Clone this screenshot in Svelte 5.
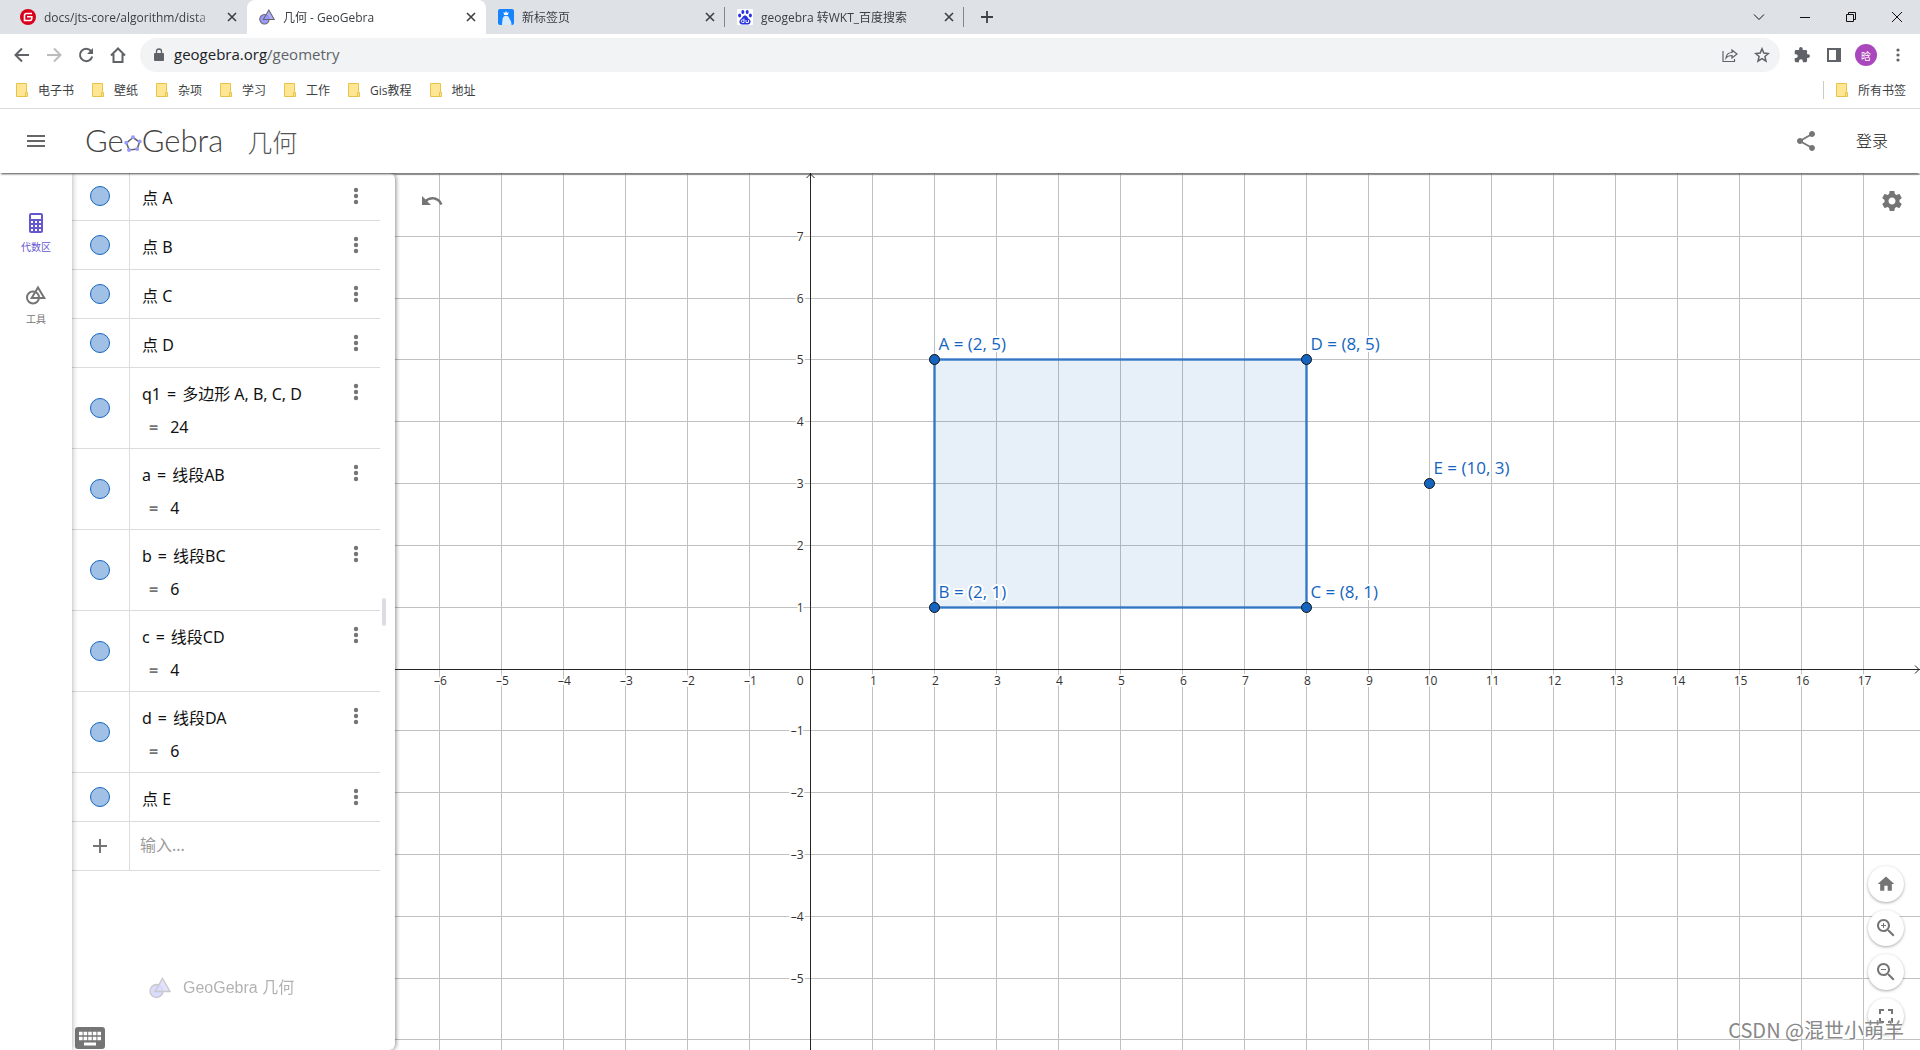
<script lang="ts">
  const tabs = [
    { icon: 'gitee', label: 'docs/jts-core/algorithm/dista', active: false },
    { icon: 'geogebra', label: '几何 - GeoGebra', active: true },
    { icon: 'newtab', label: '新标签页', active: false },
    { icon: 'baidu', label: 'geogebra 转WKT_百度搜索', active: false },
  ]

  const bookmarks = ['电子书', '壁纸', '杂项', '学习', '工作', 'Gis教程', '地址']

  const rows = [
    { text: '点 A' },
    { text: '点 B' },
    { text: '点 C' },
    { text: '点 D' },
    { name: 'q1', text: '多边形 A, B, C, D', value: '24' },
    { name: 'a', text: '线段AB', value: '4' },
    { name: 'b', text: '线段BC', value: '6' },
    { name: 'c', text: '线段CD', value: '4' },
    { name: 'd', text: '线段DA', value: '6' },
    { text: '点 E' },
  ]

  const points = [
    { name: 'A', x: 2, y: 5 },
    { name: 'B', x: 2, y: 1 },
    { name: 'C', x: 8, y: 1 },
    { name: 'D', x: 8, y: 5 },
    { name: 'E', x: 10, y: 3 },
  ]

  const unit = { x: 61.9, y: 61.83 }
  const origin = { x: 415.4, y: 496 }

  let width = $state(1524)
  let height = $state(877)
  let input = $state('')

  const sx = (x: number) => Math.round(origin.x + x * unit.x) + 0.5
  const sy = (y: number) => Math.floor(origin.y - y * unit.y) + 0.5
  const label = (n: number) => String(n).replace('-', '–')

  function range(from: number, to: number) {
    const out = []
    for (let i = Math.ceil(from); i <= to; i++) out.push(i)
    return out
  }

  const xs = $derived(range(-origin.x / unit.x, (width - origin.x) / unit.x))
  const ys = $derived(range((origin.y - height) / unit.y, origin.y / unit.y))
  const polygon = points
    .slice(0, 4)
    .map((p) => `${sx(p.x)},${sy(p.y)}`)
    .join(' ')
</script>

{#snippet ggb(size)}
  <svg width={size} height={size} viewBox="0 0 22 22" aria-hidden="true">
    <circle cx="7.500" cy="14" r="6.500" fill="#9999ff" stroke="#666" stroke-width="1.400" />
    <path d="M13.500 1.500L21 14.500H6z" fill="#9999ff" fill-opacity=".8" stroke="#666" stroke-width="1.400" />
  </svg>
{/snippet}

{#snippet dots()}
  <svg width="6" height="18" viewBox="0 0 6 18" fill="#757575" aria-hidden="true">
    <circle cx="3" cy="3" r="2.200" /><circle cx="3" cy="9" r="2.200" /><circle cx="3" cy="15" r="2.200" />
  </svg>
{/snippet}

{#snippet folder()}
  <svg width="12" height="14" viewBox="0 0 12 14" aria-hidden="true">
    <path d="M.5.5h10v9h1v4H.5z" fill="#ffe694" stroke="#e8c34a" />
    <path d="M9.500 13v-3.500h1" fill="none" stroke="#e8c34a" />
  </svg>
{/snippet}

<div class="page">
  <div class="tabstrip">
    {#each tabs as tab}
      <div class="tab" class:active={tab.active}>
        {#if tab.icon === 'gitee'}
          <svg width="16" height="16" viewBox="0 0 16 16" aria-hidden="true">
            <circle cx="8" cy="8" r="8" fill="#d8001b" />
            <path d="M12 4.500H6.500a2 2 0 0 0-2 2v5h5a2.300 2.300 0 0 0 2.300-2.300V7.800H7" fill="none" stroke="#fff" stroke-width="1.600" />
          </svg>
        {:else if tab.icon === 'geogebra'}
          {@render ggb(16)}
        {:else if tab.icon === 'newtab'}
          <svg width="16" height="16" viewBox="0 0 16 16" aria-hidden="true">
            <rect width="16" height="16" rx="2" fill="#1684fc" />
            <path d="M5.500 3l1.500 1 1-2 1 2 1.500-1L10 6H6z" fill="#fff" />
            <path d="M4 16c0-3 .5-4 .5-5.500C4.500 5.500 11 5.500 11.500 10c1.500 1.500 2 3.500 2 6z" fill="#d6eaff" />
          </svg>
        {:else}
          <svg width="16" height="16" viewBox="0 0 16 16" aria-hidden="true">
            <rect width="16" height="16" rx="1" fill="#fff" />
            <g fill="#2932e1">
              <ellipse cx="2.600" cy="6.500" rx="1.500" ry="2" /><ellipse cx="5.800" cy="3" rx="1.500" ry="2.100" />
              <ellipse cx="10.200" cy="3" rx="1.500" ry="2.100" /><ellipse cx="13.400" cy="6.500" rx="1.500" ry="2" />
              <path d="M8 6.500c2.200 0 2.600 2.500 4.300 3.800 2.500 2 1 5.200-1.300 5.200H5c-2.300 0-3.800-3.200-1.300-5.200C5.400 9 5.800 6.500 8 6.500z" />
            </g>
            <path d="M7 9.500v4H5.500a1 1 0 0 1 0-2.500H7M9 11v2.500h2.500V11" fill="none" stroke="#fff" stroke-width=".9" />
          </svg>
        {/if}
        <span class="tab-label">{tab.label}</span>
        <button class="close" aria-label="关闭">
          <svg width="10" height="10" viewBox="0 0 10 10"><path d="M1 1l8 8M9 1L1 9" stroke="#3c4043" stroke-width="1.600" /></svg>
        </button>
      </div>
    {/each}
    <button class="newtab" aria-label="新标签页">
      <svg width="12" height="12" viewBox="0 0 12 12"><path d="M6 0v12M0 6h12" stroke="#3c4043" stroke-width="1.800" /></svg>
    </button>
    <div class="window-buttons">
      <button aria-label="搜索标签页"><svg width="12" height="12" viewBox="0 0 12 12"><path d="M1 3.500l5 5 5-5" /></svg></button>
      <button aria-label="最小化"><svg width="12" height="12" viewBox="0 0 12 12"><path d="M1 6.500h10" /></svg></button>
      <button aria-label="还原"><svg width="12" height="12" viewBox="0 0 12 12"><path d="M1.500 3.500h7v7h-7zM3.500 3.500v-2h7v7h-2" /></svg></button>
      <button aria-label="关闭窗口"><svg width="12" height="12" viewBox="0 0 12 12"><path d="M1 1l10 10M11 1L1 11" /></svg></button>
    </div>
  </div>

  <div class="toolbar">
    <button class="nav" aria-label="后退">
      <svg width="16" height="16" viewBox="0 0 16 16"><path d="M15 8H2M8 1.500L1.500 8 8 14.500" /></svg>
    </button>
    <button class="nav off" aria-label="前进">
      <svg width="16" height="16" viewBox="0 0 16 16"><path d="M1 8h13M8 1.500L14.500 8 8 14.500" /></svg>
    </button>
    <button class="nav" aria-label="刷新">
      <svg width="16" height="16" viewBox="0 0 16 16"><path d="M13 4A6.200 6.200 0 1 0 14.200 9.500" /><path d="M15 1v6H9z" fill="#5f6368" stroke="none" /></svg>
    </button>
    <button class="nav" aria-label="主页">
      <svg width="16" height="16" viewBox="0 0 16 16"><path d="M1 8.500L8 1.500l7 7M3.500 7v8h9V7" /></svg>
    </button>
    <div class="omnibox">
      <svg width="10" height="14" viewBox="0 0 10 14" aria-hidden="true">
        <path d="M1 5h8a1 1 0 0 1 1 1v6a1 1 0 0 1-1 1H1a1 1 0 0 1-1-1V6a1 1 0 0 1 1-1z" fill="#5f6368" />
        <path d="M2.500 6V3.500a2.500 2.500 0 0 1 5 0V6" fill="none" stroke="#5f6368" stroke-width="1.300" />
      </svg>
      <div class="url">geogebra.org<span>/geometry</span></div>
      <button class="ico" aria-label="分享此页">
        <svg width="16" height="16" viewBox="0 0 16 16" fill="none" stroke="#5f6368" stroke-width="1.200">
          <path d="M1 4v10.500h11.500V12M4 11c.5-4 3-5.500 6-5.500V3l5 4-5 4V8.500C7.500 8.500 5.500 9 4 11z" />
        </svg>
      </button>
      <button class="ico" aria-label="添加书签">
        <svg width="16" height="16" viewBox="0 0 16 16" fill="none" stroke="#5f6368" stroke-width="1.500">
          <path d="M8 1.800l1.800 4.300 4.600.4-3.500 3 1.100 4.600L8 11.700l-4 2.400 1.100-4.600-3.500-3 4.600-.4z" />
        </svg>
      </button>
    </div>
    <div class="extensions">
      <button class="ico" aria-label="扩展程序">
        <svg width="16" height="16" viewBox="1 1 22 22" fill="#5f6368">
          <path d="M20.500 11H19V7a2 2 0 0 0-2-2h-4V3.500a2.500 2.500 0 0 0-5 0V5H4a2 2 0 0 0-2 2v3.800h1.500a2.700 2.700 0 0 1 0 5.400H2V20a2 2 0 0 0 2 2h3.800v-1.500a2.700 2.700 0 0 1 5.400 0V22H17a2 2 0 0 0 2-2v-4h1.500a2.500 2.500 0 0 0 0-5z" />
        </svg>
      </button>
      <button class="ico" aria-label="侧边栏">
        <svg width="16" height="16" viewBox="0 0 16 16"><path d="M2 2h12v12H2z" fill="none" stroke="#5f6368" stroke-width="2" /><path d="M10 2h4v12h-4z" fill="#5f6368" /></svg>
      </button>
      <button class="avatar">晗</button>
      <button class="ico" aria-label="菜单">
        <svg width="4" height="14" viewBox="0 0 4 14" fill="#5f6368"><circle cx="2" cy="2" r="1.600" /><circle cx="2" cy="7" r="1.600" /><circle cx="2" cy="12" r="1.600" /></svg>
      </button>
    </div>
  </div>

  <div class="bookmarks">
    {#each bookmarks as name}
      <a href="#bookmark">{@render folder()}{name}</a>
    {/each}
    <a class="all" href="#bookmark">{@render folder()}所有书签</a>
  </div>

  <header>
    <button class="plain" aria-label="主菜单">
      <svg width="18" height="12" viewBox="0 0 18 12"><path d="M0 1h18M0 6h18M0 11h18" stroke="#666" stroke-width="2" /></svg>
    </button>
    <a class="logo" href="#home">
      <span>Ge</span>
      <svg width="18" height="17" viewBox="0 0 18 17" aria-label="o">
        <path d="M9 2.500l6.500 4.500-2.300 7-8 1L2.500 8z" fill="none" stroke="#666" stroke-width="1.600" />
        <g fill="#9999ff"><circle cx="9" cy="2.300" r="2" /><circle cx="15.700" cy="6.500" r="2" /><circle cx="13.200" cy="14" r="2" /><circle cx="5" cy="15" r="2" /><circle cx="2.300" cy="7.800" r="2" /></g>
      </svg>
      <span>Gebra</span>
    </a>
    <h1>几何</h1>
    <button class="plain share" aria-label="分享">
      <svg width="24" height="24" viewBox="0 0 24 24" fill="#757575">
        <path d="M18 16.080c-.76 0-1.440.3-1.960.77L8.910 12.700c.05-.23.09-.46.09-.7s-.04-.47-.09-.7l7.050-4.110c.54.5 1.250.81 2.040.81 1.660 0 3-1.340 3-3s-1.340-3-3-3-3 1.340-3 3c0 .24.04.47.09.7L8.040 9.810C7.500 9.310 6.790 9 6 9c-1.660 0-3 1.340-3 3s1.340 3 3 3c.79 0 1.500-.31 2.040-.81l7.120 4.160c-.05.21-.08.43-.08.65 0 1.610 1.310 2.920 2.920 2.920s2.920-1.310 2.920-2.920-1.310-2.920-2.920-2.920z" />
      </svg>
    </button>
    <button class="plain login">登录</button>
  </header>

  <main>
    <nav class="rail">
      <button class="rail-item selected">
        <svg width="24" height="24" viewBox="0 0 24 24">
          <path fill-rule="evenodd" fill="#6557d2" d="M7 2h10a2 2 0 0 1 2 2v16a2 2 0 0 1-2 2H7a2 2 0 0 1-2-2V4a2 2 0 0 1 2-2zM7 4v4h10V4zM7 10v2h2v-2zM11 10v2h2v-2zM15 10v2h2v-2zM7 14v2h2v-2zM11 14v2h2v-2zM15 14v2h2v-2zM7 18v2h2v-2zM11 18v2h2v-2zM15 18v2h2v-2z" />
        </svg>
        代数区
      </button>
      <button class="rail-item">
        <svg width="24" height="24" viewBox="0 0 24 24" fill="none" stroke="#757575" stroke-width="2">
          <circle cx="9" cy="14.500" r="6" /><path d="M14 4.500L20.300 15H7.700z" />
        </svg>
        工具
      </button>
    </nav>

    <section class="algebra">
      <div class="list">
        {#each rows as row}
          <div class="row" class:tall={row.value}>
            <div class="marble-cell"><button class="marble" aria-label="显示 {row.name ?? row.text}"></button></div>
            <div class="content">
              <div>{#if row.name}{row.name}<span class="op">=</span>{/if}{row.text}</div>
              {#if row.value}
                <div class="value"><b>=</b>{row.value}</div>
              {/if}
            </div>
            <button class="plain more" aria-label="更多">{@render dots()}</button>
          </div>
        {/each}
        <div class="row">
          <div class="marble-cell">
            <button class="plain" aria-label="添加">
              <svg width="14" height="14" viewBox="0 0 14 14"><path d="M7 0v14M0 7h14" stroke="#757575" stroke-width="2" /></svg>
            </button>
          </div>
          <input aria-label="输入" placeholder="输入..." bind:value={input} />
        </div>
      </div>
      <div class="brand">{@render ggb(22)}<span>GeoGebra 几何</span></div>
      <div class="dragger"></div>
      <button class="plain keyboard" aria-label="键盘">
        <svg width="30" height="22" viewBox="0 0 30 22">
          <rect width="30" height="22" rx="3" fill="#757575" />
          <path d="M4 6.500h22M4 11.500h22" stroke="#fff" stroke-width="3.600" stroke-dasharray="3.600 1" />
          <path d="M9 17h12" stroke="#fff" stroke-width="3" />
        </svg>
      </button>
    </section>

    <section class="graphics" bind:clientWidth={width} bind:clientHeight={height}>
      <svg class="plot" width="100%" height="100%">
        <g stroke="#c0c0c0">
          {#each xs as x}<line x1={sx(x)} x2={sx(x)} y1="0" y2={height} />{/each}
          {#each ys as y}<line x1="0" x2={width} y1={sy(y)} y2={sy(y)} />{/each}
        </g>
        <g stroke="#252525" fill="none">
          <line x1={sx(0)} x2={sx(0)} y1="0" y2={height} />
          <line x1="0" x2={width} y1={sy(0)} y2={sy(0)} />
          <path d="M{sx(0) - 4} 5L{sx(0)} 1L{sx(0) + 4} 5" />
          <path d="M{width - 5} {sy(0) - 4}L{width - 1} {sy(0)}L{width - 5} {sy(0) + 4}" />
        </g>
        <g class="ticks">
          {#each xs.filter((x) => x !== 0) as x}
            <text x={sx(x) + 1} y={sy(0) + 15} text-anchor="middle">{label(x)}</text>
          {/each}
          {#each ys.filter((y) => y !== 0 && sy(y) > 10 && sy(y) < height - 20) as y}
            <text x={sx(0) - 7} y={sy(y) + 4} text-anchor="end">{label(y)}</text>
          {/each}
          <text x={sx(0) - 7} y={sy(0) + 15} text-anchor="end">0</text>
        </g>
        <polygon points={polygon} fill="#1565c0" fill-opacity=".1" stroke="#1565c0" stroke-opacity=".8" stroke-width="2.500" />
        {#each points as p}
          <circle cx={sx(p.x)} cy={sy(p.y)} r="5" fill="#1565c0" stroke="#111" />
          <text class="point-label" x={sx(p.x) + 4} y={sy(p.y) - 10}>{p.name} = ({p.x}, {p.y})</text>
        {/each}
      </svg>

      <button class="plain undo" aria-label="撤销">
        <svg width="24" height="24" viewBox="0 0 24 24" fill="#757575"><path d="M12.500 8c-2.650 0-5.050.99-6.900 2.600L2 7v9h9l-3.620-3.620c1.390-1.160 3.160-1.880 5.120-1.880 3.540 0 6.550 2.310 7.600 5.500l2.370-.78C21.080 11.030 17.150 8 12.500 8z" /></svg>
      </button>
      <button class="plain settings" aria-label="设置">
        <svg width="24" height="24" viewBox="0 0 24 24" fill="#757575"><path d="M19.430 12.980c.04-.32.07-.64.07-.98s-.03-.66-.07-.98l2.110-1.650c.19-.15.24-.42.12-.64l-2-3.460c-.12-.22-.39-.3-.61-.22l-2.490 1c-.52-.4-1.080-.73-1.690-.98l-.38-2.650C14.460 2.180 14.250 2 14 2h-4c-.25 0-.46.18-.49.42l-.38 2.650c-.61.25-1.170.59-1.690.98l-2.490-1c-.23-.09-.49 0-.61.22l-2 3.460c-.13.22-.07.49.12.64l2.110 1.650c-.04.32-.07.65-.07.98s.03.66.07.98l-2.110 1.650c-.19.15-.24.42-.12.64l2 3.460c.12.22.39.3.61.22l2.490-1c.52.4 1.080.73 1.690.98l.38 2.650c.03.24.24.42.49.42h4c.25 0 .46-.18.49-.42l.38-2.650c.61-.25 1.170-.59 1.690-.98l2.490 1c.23.09.49 0 .61-.22l2-3.460c.12-.22.07-.49-.12-.64l-2.110-1.650zM12 15.500c-1.930 0-3.500-1.570-3.500-3.500s1.570-3.500 3.500-3.500 3.500 1.570 3.500 3.500-1.570 3.500-3.500 3.500z" /></svg>
      </button>

      <div class="zoom">
        <button aria-label="标准视图"><svg width="20" height="20" viewBox="0 0 24 24"><path d="M10 20v-6h4v6h5v-8h3L12 3 2 12h3v8z" /></svg></button>
        <button aria-label="放大"><svg width="24" height="24" viewBox="0 0 24 24"><path d="M15.500 14h-.79l-.28-.27C15.410 12.590 16 11.110 16 9.500 16 5.910 13.090 3 9.500 3S3 5.910 3 9.500 5.910 16 9.500 16c1.610 0 3.090-.59 4.230-1.570l.27.28v.79l5 4.990L20.490 19l-4.990-5zm-6 0C7.010 14 5 11.990 5 9.500S7.010 5 9.500 5 14 7.010 14 9.500 11.990 14 9.500 14zM12 10h-2v2H9v-2H7V9h2V7h1v2h2v1z" /></svg></button>
        <button aria-label="缩小"><svg width="24" height="24" viewBox="0 0 24 24"><path d="M15.500 14h-.79l-.28-.27C15.410 12.590 16 11.110 16 9.500 16 5.910 13.090 3 9.500 3S3 5.910 3 9.500 5.910 16 9.500 16c1.610 0 3.090-.59 4.230-1.570l.27.28v.79l5 4.990L20.490 19l-4.990-5zm-6 0C7.010 14 5 11.990 5 9.500S7.010 5 9.500 5 14 7.010 14 9.500 11.990 14 9.500 14zM7 9h5v1H7z" /></svg></button>
        <button aria-label="全屏"><svg width="24" height="24" viewBox="0 0 24 24"><path d="M7 14H5v5h5v-2H7v-3zm-2-4h2V7h3V5H5v5zm12 7h-3v2h5v-5h-2v3zM14 5v2h3v3h2V5h-5z" /></svg></button>
      </div>
      <div class="stamp">CSDN @混世小萌羊</div>
    </section>
  </main>
</div>

<style>
  :global(body) {
    background: #fff;
  }

  .page {
    height: 100vh;
    display: flex;
    flex-direction: column;
    overflow: hidden;
    font-family: "Open Sans", "Noto Sans CJK SC", sans-serif;
    font-size: 12px;
    color: #3c4043;
  }

  .page * {
    box-sizing: border-box;
  }

  button {
    font: inherit;
    color: inherit;
    background: none;
    border: 0;
    padding: 0;
    display: flex;
    align-items: center;
    justify-content: center;
    flex-shrink: 0;
  }

  a {
    color: inherit;
    text-decoration: none;
  }

  svg {
    display: block;
    flex-shrink: 0;
  }

  /* browser chrome */
  .tabstrip {
    height: 34px;
    flex-shrink: 0;
    display: flex;
    align-items: center;
    background: #dee1e6;
    padding-left: 8px;
  }

  .tab {
    width: 239px;
    height: 34px;
    display: flex;
    align-items: center;
    gap: 8px;
    padding: 0 7px 0 12px;
    position: relative;
  }

  .tab.active {
    background: #fff;
    border-radius: 8px 8px 0 0;
  }

  .tab:not(.active):not(:first-child)::after {
    content: "";
    position: absolute;
    right: 0;
    top: 7px;
    width: 1px;
    height: 20px;
    background: #80868b;
  }

  .tab-label {
    flex: 1;
    overflow: hidden;
    white-space: nowrap;
    mask-image: linear-gradient(to right, #000 88%, transparent);
  }

  .close {
    width: 16px;
    height: 16px;
  }

  .newtab {
    width: 28px;
    height: 28px;
    margin-left: 9px;
  }

  .window-buttons {
    margin-left: auto;
    display: flex;
    height: 28px;
  }

  .window-buttons button {
    width: 46px;
  }

  .window-buttons svg {
    fill: none;
    stroke: #111;
  }

  .toolbar {
    height: 42px;
    flex-shrink: 0;
    display: flex;
    align-items: center;
    padding-left: 6px;
  }

  .nav {
    width: 32px;
    height: 32px;
  }

  .nav svg {
    fill: none;
    stroke: #5f6368;
    stroke-width: 2;
  }

  .nav.off svg {
    stroke: #babcbe;
  }

  .omnibox {
    flex: 1;
    height: 34px;
    margin-left: 6px;
    display: flex;
    align-items: center;
    padding: 0 2px 0 14px;
    background: #f1f3f4;
    border-radius: 17px;
  }

  .url {
    flex: 1;
    margin-left: 10px;
    padding-bottom: 2px;
    font-size: 15px;
    color: #202124;
  }

  .url span {
    color: #5f6368;
  }

  .ico {
    width: 32px;
    height: 32px;
  }

  .extensions {
    display: flex;
    align-items: center;
    padding: 0 6px;
  }

  .avatar {
    width: 22px;
    height: 22px;
    margin: 0 5px;
    border-radius: 50%;
    background: #ab47bc;
    color: #fff;
    font-size: 10px;
  }

  .bookmarks {
    height: 33px;
    flex-shrink: 0;
    display: flex;
    align-items: center;
    gap: 18px;
    padding: 0 14px 4px 16px;
    border-bottom: 1px solid #dadce0;
  }

  .bookmarks a {
    display: flex;
    align-items: center;
    gap: 10px;
  }

  .bookmarks .all {
    margin-left: auto;
    padding-left: 12px;
    border-left: 1px solid #c8cacd;
  }

  /* app header */
  header {
    height: 64px;
    flex-shrink: 0;
    display: flex;
    align-items: center;
    padding: 0 32px 0 27px;
    position: relative;
    z-index: 3;
    background: #fff;
    box-shadow: 0 2px 2px -1px rgba(0, 0, 0, 0.7);
  }

  .logo {
    margin-left: 40px;
    padding-bottom: 2px;
    display: flex;
    align-items: baseline;
    font-family: Lato, sans-serif;
    font-size: 31px;
    font-weight: 300;
    line-height: 32px;
    color: #444;
  }

  h1 {
    margin: 0 0 0 24px;
    padding-top: 2px;
    font-size: 25px;
    font-weight: 300;
    line-height: 32px;
    color: #555;
  }

  .share {
    margin-left: auto;
  }

  .login {
    margin-left: 38px;
    padding-bottom: 2px;
    font-size: 16px;
    font-weight: 300;
    color: #111;
  }

  /* workspace */
  main {
    flex: 1;
    min-height: 0;
    display: flex;
  }

  .rail {
    width: 72px;
    flex-shrink: 0;
    display: flex;
    flex-direction: column;
    gap: 28px;
    padding-top: 38px;
    position: relative;
    z-index: 2;
    background: #fff;
    box-shadow: 0 0 6px rgba(0, 0, 0, 0.35);
  }

  .rail-item {
    flex-direction: column;
    gap: 4px;
    font-size: 10px;
    line-height: 16px;
    color: #757575;
  }

  .rail-item.selected {
    color: #6557d2;
  }

  .algebra {
    width: 323px;
    flex-shrink: 0;
    display: flex;
    flex-direction: column;
    position: relative;
    z-index: 1;
    background: #fff;
    border-radius: 0 6px 6px 0;
    box-shadow: 1px 0 4px rgba(0, 0, 0, 0.45);
  }

  .list {
    margin-right: 15px;
    font-family: "Noto Sans", "Noto Sans CJK SC", sans-serif;
    font-size: 16px;
    line-height: 24px;
    color: #111;
  }

  .row {
    min-height: 49px;
    display: flex;
    border-bottom: 1px solid #dcdcdc;
  }

  /* the list is scrolled by a pixel */
  .row:first-child {
    margin-top: -1px;
  }

  .row.tall {
    min-height: 81px;
  }

  .marble-cell {
    width: 58px;
    padding-right: 1px;
    display: flex;
    align-items: center;
    justify-content: center;
    border-right: 1px solid #dcdcdc;
  }

  .marble {
    width: 20px;
    height: 20px;
    border: 1px solid #1565c0;
    border-radius: 50%;
    background: #a1c0e6;
  }

  .content {
    flex: 1;
    padding: 14px 0 0 12px;
  }

  .op {
    margin: 0 6px;
  }

  .value {
    margin-top: 9px;
    padding-left: 7px;
  }

  .value b {
    margin-right: 12px;
    color: #757575;
  }

  .more {
    width: 48px;
    height: 48px;
  }

  input {
    flex: 1;
    min-width: 0;
    padding: 0 10px 2px;
    border: 0;
    outline: 0;
    background: none;
    font: inherit;
  }

  input::placeholder {
    color: #9a9a9a;
    opacity: 1;
  }

  .brand {
    margin: auto 0 50px;
    display: flex;
    align-items: center;
    gap: 12px;
    padding-left: 77px;
    font-family: "Liberation Sans", "Noto Sans CJK SC", sans-serif;
    font-size: 16px;
    line-height: 24px;
    color: #222;
    opacity: 0.35;
  }

  .dragger {
    position: absolute;
    right: 9px;
    top: calc(50% - 14px);
    width: 4px;
    height: 28px;
    border-radius: 2px;
    background: #dcdce2;
  }

  .keyboard {
    position: absolute;
    left: 3px;
    bottom: 1px;
  }

  .graphics {
    flex: 1;
    min-width: 0;
    position: relative;
    overflow: hidden;
  }

  .plot {
    position: absolute;
    inset: 0;
  }

  .ticks,
  .point-label {
    font-family: "Open Sans", sans-serif;
    font-size: 12px;
    fill: #333;
    stroke: #fff;
    stroke-width: 4px;
    stroke-linejoin: round;
    paint-order: stroke;
  }

  .point-label {
    font-size: 17px;
    fill: #1565c0;
  }

  .undo {
    position: absolute;
    left: 25px;
    top: 16px;
  }

  .settings {
    position: absolute;
    right: 16px;
    top: 16px;
  }

  .zoom {
    position: absolute;
    right: 16px;
    bottom: 16px;
    display: flex;
    flex-direction: column;
    gap: 8px;
  }

  .zoom button {
    width: 36px;
    height: 36px;
    border-radius: 50%;
    background: #fff;
    box-shadow: 0 1px 3px rgba(0, 0, 0, 0.35);
  }

  .zoom svg {
    fill: #757575;
  }

  .stamp {
    position: absolute;
    right: 16px;
    bottom: 6px;
    font-family: "Noto Sans CJK SC", sans-serif;
    font-size: 20px;
    line-height: 28px;
    color: #888;
    text-shadow: 1px 1px 1px #fff;
  }
</style>
